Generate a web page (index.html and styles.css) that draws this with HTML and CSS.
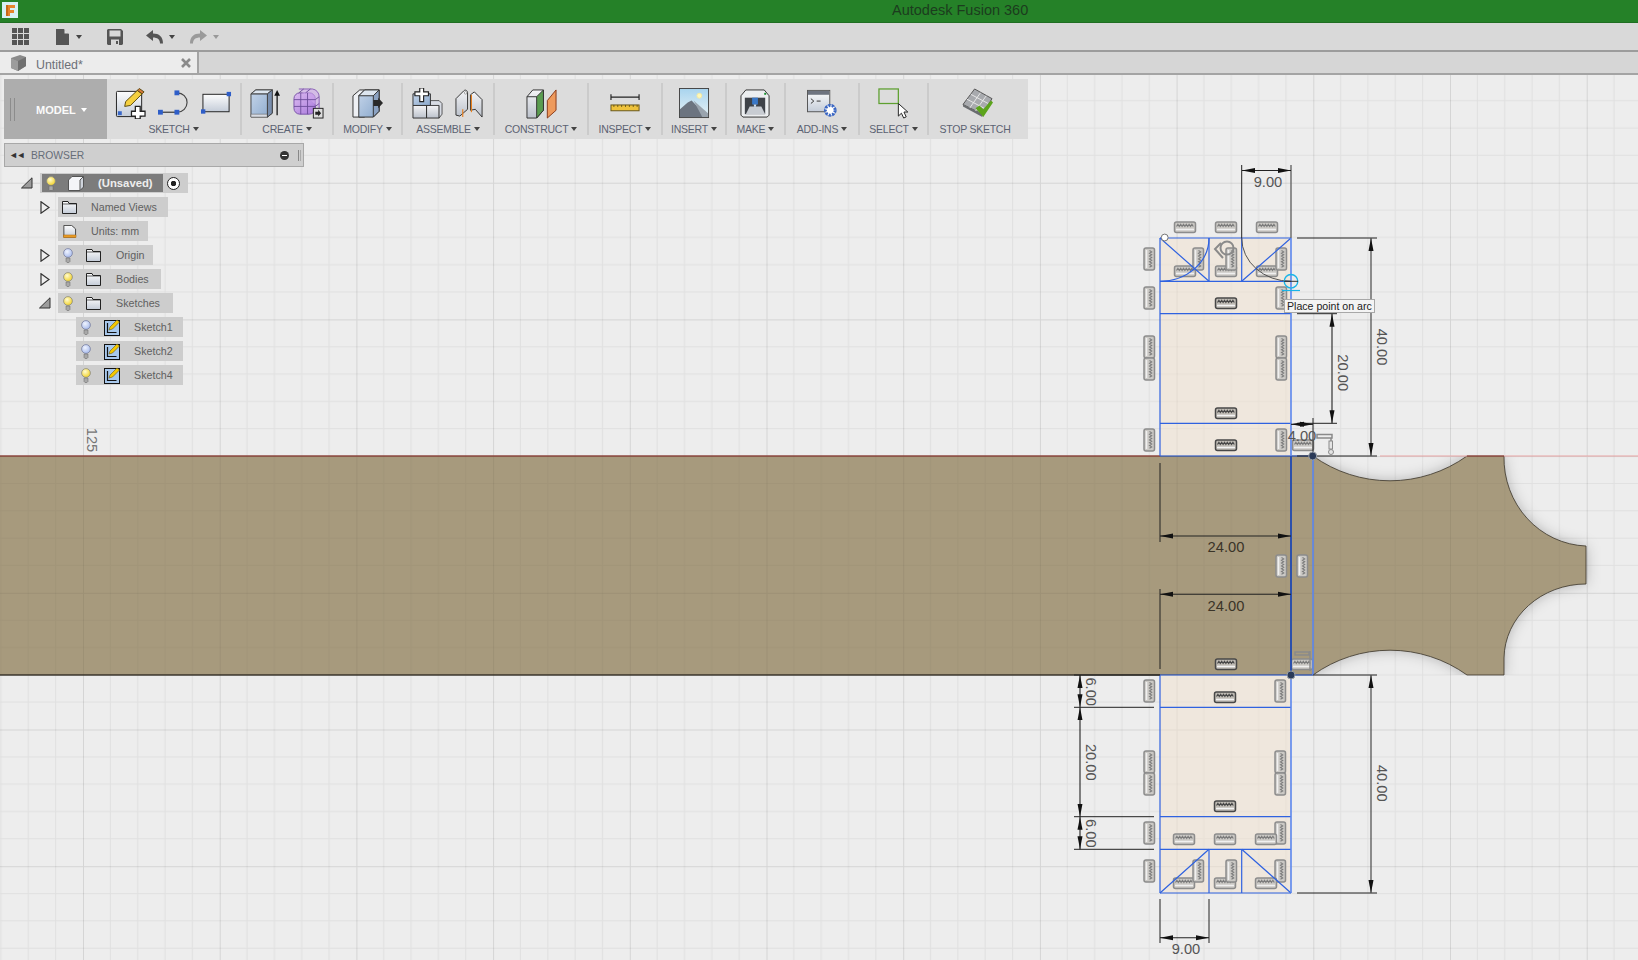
FILE: index.html
```html
<!DOCTYPE html>
<html lang="en">
<head>
    <meta charset="UTF-8">
    <title>Autodesk Fusion 360</title>
    <link rel="stylesheet" href="styles.css">
</head>
<body>

    <!-- shared gradients and icons -->
    <svg class="defs" aria-hidden="true">
        <defs>
            <linearGradient id="gPaper" x1="0" y1="0" x2="0" y2="1"><stop offset="0" stop-color="#fdfdfd"/><stop offset="1" stop-color="#c4ccd8"/></linearGradient>
            <linearGradient id="gBlue" x1="0" y1="0" x2="1" y2="1"><stop offset="0" stop-color="#c6d6ea"/><stop offset="1" stop-color="#8aa8cc"/></linearGradient>
            <linearGradient id="gGrey" x1="0" y1="0" x2="0" y2="1"><stop offset="0" stop-color="#f4f4f6"/><stop offset="1" stop-color="#bcc2cc"/></linearGradient>
            <linearGradient id="gSky" x1="0" y1="0" x2="0" y2="1"><stop offset="0" stop-color="#a8d4ee"/><stop offset="1" stop-color="#e8f2f6"/></linearGradient>
            <linearGradient id="gPurple" x1="0" y1="0" x2="1" y2="1"><stop offset="0" stop-color="#dcbcf0"/><stop offset="1" stop-color="#a878dc"/></linearGradient>
            <radialGradient id="gBulbY" cx=".4" cy=".35" r=".7"><stop offset="0" stop-color="#fffbd0"/><stop offset="1" stop-color="#f2d020"/></radialGradient>
            <radialGradient id="gBulbB" cx=".4" cy=".35" r=".7"><stop offset="0" stop-color="#f0f4ff"/><stop offset="1" stop-color="#a4b8ec"/></radialGradient>
        </defs>
        <symbol id="bulb-y" viewBox="0 0 10 15">
            <circle cx="5" cy="5" r="4.400" fill="url(#gBulbY)" stroke="#8a8a80" stroke-width=".8"/>
            <path d="M3 10h4v3.500l-1 1h-2l-1-1z" fill="#a8a8a8" stroke="#666" stroke-width=".5"/>
        </symbol>
        <symbol id="bulb-b" viewBox="0 0 10 15">
            <circle cx="5" cy="5" r="4.400" fill="url(#gBulbB)" stroke="#7a80a0" stroke-width=".8"/>
            <path d="M3 10h4v3.500l-1 1h-2l-1-1z" fill="#a8a8a8" stroke="#666" stroke-width=".5"/>
        </symbol>
        <symbol id="folder" viewBox="0 0 15 13">
            <path d="M.5 12.500v-12h5.500l1 2h7.500v10z" fill="url(#gPaper)" stroke="#222"/>
            <path d="M.5 3h14" stroke="#222" stroke-width=".7"/>
        </symbol>
        <symbol id="tree-sketch" viewBox="0 0 16 17">
            <rect x=".5" y="1.500" width="15" height="15" fill="#a8c8ec" stroke="#111"/>
            <path d="M3.500 4v9.500h9" fill="none" stroke="#111" stroke-width="1.200"/>
            <path d="M5 11l1-3 7-7 2.500 2-7 7z" fill="#f5c800" stroke="#6a5a10" stroke-width=".6"/>
        </symbol>
        <symbol id="twist-open" viewBox="0 0 12 12">
            <path d="M.5 11L11 .8V11z" fill="#9c9c9c" stroke="#333"/>
        </symbol>
        <symbol id="twist-closed" viewBox="0 0 10 13">
            <path d="M1 .8L9 6.500 1 12.200z" fill="#efefef" stroke="#333" stroke-width="1.200"/>
        </symbol>
    </svg>

    <!-- title bar -->
    <header class="titlebar">
        <svg class="app-icon" viewBox="0 0 16 16">
            <rect width="16" height="16" fill="#d8f0f4"/>
            <path d="M4 3h9v3H8v2h4v3H8v3H4z" fill="#e8842c"/>
            <path d="M4 3h2v11H4z" fill="#c86818"/>
        </svg>
        <span class="app-title">Autodesk Fusion 360</span>
    </header>

    <!-- quick access bar -->
    <div class="quickbar">
        <svg class="qa-grid" viewBox="0 0 17 17">
            <path fill="#555" d="M0 0h5v5H0zM6 0h5v5H6zM12 0h5v5h-5zM0 6h5v5H0zM6 6h5v5H6zM12 6h5v5h-5zM0 12h5v5H0zM6 12h5v5H6zM12 12h5v5h-5z"/>
        </svg>
        <svg class="qa-file" viewBox="0 0 14 16"><path fill="#555" d="M0 0h8l5 5v11H0z"/><path fill="#ddd" d="M8.500 0v4.500H13z"/></svg>
        <i class="caret dark"></i>
        <svg class="qa-save" viewBox="0 0 16 16">
            <path fill="#555" d="M1 0h13l2 2v13l-1 1H1l-1-1V1z"/>
            <path fill="#d8d8d8" d="M2.500 1.500h11v6h-11z"/>
            <path fill="#d8d8d8" d="M4 10.500h8V16H4z"/>
            <path fill="#555" d="M9 12h2v3H9z"/>
        </svg>
        <svg class="qa-undo" viewBox="0 0 17 14"><path fill="#555" d="M0 5.500L7 0v3.500c6 0 10 3 10 10h-3c0-4-2.500-6-7-6V11z"/></svg>
        <i class="caret dark"></i>
        <svg class="qa-redo" viewBox="0 0 17 14"><path fill="#9a9a9a" d="M17 5.500L10 0v3.500c-6 0-10 3-10 10h3c0-4 2.500-6 7-6V11z"/></svg>
        <i class="caret faint"></i>
    </div>

    <!-- document tabs -->
    <div class="tabbar">
        <div class="tab">
            <svg class="tab-cube" viewBox="0 0 16 16">
                <path d="M1 3l9-3 6 2v9l-8 5-7-3z" fill="#8a8a8a"/>
                <path d="M1 3l7 3 8-4v9l-8 5z" fill="#707070"/>
                <path d="M1 3l7 3v10l-7-3z" fill="#9c9c9c"/>
            </svg>
            <span class="tab-name">Untitled*</span>
            <svg class="tab-close" viewBox="0 0 10 10"><path d="M1 1l8 8M9 1l-8 8" stroke="#8a8a8a" stroke-width="2.600"/></svg>
        </div>
    </div>

    <main class="canvas">
        <!-- sketch on the drawing plane, viewBox follows window coordinates -->
        <svg class="scene" viewBox="0 75 1638 885">
            <defs>
                <pattern id="grid" patternUnits="userSpaceOnUse" x="83" y="46" width="136.7" height="136.7">
                    <path d="M27.340 0V136.700M54.680 0V136.700M82.020 0V136.700M109.360 0V136.700M0 27.340H136.700M0 54.680H136.700M0 82.020H136.700M0 109.360H136.700" stroke="#000" stroke-opacity=".055"/>
                    <path d="M.5 0V136.700M0 .5H136.700" stroke="#000" stroke-opacity=".1"/>
                </pattern>
                <marker id="tip" markerUnits="userSpaceOnUse" markerWidth="14" markerHeight="8" refX="13" refY="4" orient="auto-start-reverse">
                    <path d="M0 1.500L13 4 0 6.500z" fill="#111"/>
                </marker>
                <filter id="soft" x="-10%" y="-20%" width="120%" height="140%"><feGaussianBlur stdDeviation="7"/></filter>
                <clipPath id="band"><rect x="0" y="456" width="1638" height="219"/></clipPath>
                <path id="bodyShape" d="M-5 456H1313A132 132 0 0 0 1467 456H1504A85 88 0 0 0 1586 546V584A82 75 0 0 0 1504 658V675H1467A132 132 0 0 0 1313 675H-5Z"/>
                <clipPath id="bodyClip"><use href="#bodyShape"/></clipPath>
                <g id="ch">
                    <rect x="-10.500" y="-5" width="21" height="10.500" rx="2" fill="#cbc9c5" stroke="#8c8c8c" stroke-width="1.500"/>
                    <path d="M-8.500 -.5l1.400-2.200 1.400 2.200 1.400-2.200 1.400 2.200 1.400-2.200 1.400 2.200 1.400-2.200 1.400 2.200 1.400-2.200 1.400 2.200 1.400-2.200 1.400 2.200" fill="none" stroke="#7c7c7c" stroke-width="1.100"/>
                    <path d="M-9 2.500H9" stroke="#f0f0f0" stroke-width="1.500"/>
                </g>
                <g id="chd">
                    <rect x="-10.500" y="-5" width="21" height="10.500" rx="2" fill="#c0bcb5" stroke="#484848" stroke-width="1.500"/>
                    <path d="M-8.500 -.5l1.400-2.200 1.400 2.200 1.400-2.200 1.400 2.200 1.400-2.200 1.400 2.200 1.400-2.200 1.400 2.200 1.400-2.200 1.400 2.200 1.400-2.200 1.400 2.200" fill="none" stroke="#484848" stroke-width="1.100"/>
                    <path d="M-9 2.500H9" stroke="#f4f4f4" stroke-width="1.500"/>
                </g>
                <g id="cv">
                    <rect x="-5" y="-11" width="10.500" height="22" rx="2" fill="#cbc9c5" stroke="#8c8c8c" stroke-width="1.500"/>
                    <path d="M.5 -8.500l2.200 1.400-2.200 1.400 2.200 1.400-2.200 1.400 2.200 1.400-2.200 1.400 2.200 1.400-2.200 1.400 2.200 1.400-2.200 1.400 2.200 1.400-2.200 1.400" fill="none" stroke="#7c7c7c" stroke-width="1.100"/>
                    <path d="M-2.500 -9V9" stroke="#f0f0f0" stroke-width="1.500"/>
                </g>
            </defs>

            <rect x="0" y="75" width="1638" height="885" fill="#ededed"/>
            <rect x="0" y="75" width="1638" height="885" fill="url(#grid)"/>

            <!-- body -->
            <g clip-path="url(#band)">
                <use href="#bodyShape" filter="url(#soft)" fill="#000" fill-opacity=".26"/>
            </g>
            <use href="#bodyShape" fill="#a79a7d" stroke="#3a3428" stroke-width=".8"/>
            <rect x="0" y="456" width="1638" height="219" fill="url(#grid)" clip-path="url(#bodyClip)" opacity=".6"/>

            <!-- axis -->
            <path d="M0 456H1160M1467 456H1504" stroke="#a5423a" stroke-width="1.100"/>
            <path d="M1380 456H1467M1504 456H1638" stroke="#e8a4a4" stroke-width="1.100"/>
            <path d="M0 675H1160" stroke="#2e2a22" stroke-width="1"/>

            <!-- sketch profile fill -->
            <path d="M1160 238H1291V456H1160ZM1160 675H1291V893H1160Z" fill="#f0e2d0" fill-opacity=".55"/>

            <!-- constraint glyphs, top -->
            <use href="#ch" x="1185" y="227"/><use href="#ch" x="1226" y="227"/><use href="#ch" x="1267" y="227"/>
            <use href="#ch" x="1185" y="271"/><use href="#ch" x="1226" y="271"/><use href="#ch" x="1267" y="271"/>
            <use href="#cv" x="1149" y="259"/><use href="#cv" x="1149" y="298"/><use href="#cv" x="1149" y="347"/><use href="#cv" x="1149" y="369"/><use href="#cv" x="1149" y="440"/>
            <use href="#cv" x="1281" y="259"/><use href="#cv" x="1281" y="298"/><use href="#cv" x="1281" y="347"/><use href="#cv" x="1281" y="369"/><use href="#cv" x="1281" y="440"/>
            <use href="#cv" x="1198" y="259"/><use href="#cv" x="1231" y="259"/>
            <use href="#chd" x="1226" y="303"/><use href="#chd" x="1226" y="413"/><use href="#chd" x="1226" y="445"/>
            <use href="#ch" x="1303" y="445"/>
            <!-- constraint glyphs, middle -->
            <use href="#cv" x="1281" y="566"/><use href="#cv" x="1302" y="566"/>
            <use href="#chd" x="1226" y="664"/><use href="#ch" x="1302" y="664"/>
            <!-- constraint glyphs, bottom -->
            <use href="#cv" x="1149" y="691"/><use href="#cv" x="1149" y="762"/><use href="#cv" x="1149" y="784"/><use href="#cv" x="1149" y="833"/><use href="#cv" x="1149" y="871"/>
            <use href="#cv" x="1280" y="691"/><use href="#cv" x="1280" y="762"/><use href="#cv" x="1280" y="784"/><use href="#cv" x="1280" y="833"/><use href="#cv" x="1280" y="871"/>
            <use href="#chd" x="1225" y="697"/><use href="#chd" x="1225" y="806"/>
            <use href="#ch" x="1184" y="839"/><use href="#ch" x="1225" y="839"/><use href="#ch" x="1266" y="839"/>
            <use href="#ch" x="1184" y="883"/><use href="#ch" x="1225" y="883"/><use href="#ch" x="1266" y="883"/>
            <use href="#cv" x="1198" y="871"/><use href="#cv" x="1231" y="871"/>
            <!-- concentric and fix marks -->
            <circle cx="1227" cy="248" r="6.500" fill="none" stroke="#8a8a8a" stroke-width="2"/>
            <path d="M1221 243l-6 6 8 9" fill="none" stroke="#8a8a8a" stroke-width="2"/>
            <path d="M1317 434.500h15v3.500h-15zM1331 438v9" fill="none" stroke="#8a8a8a" stroke-width="1.500"/>
            <rect x="1329" y="441" width="3.500" height="8" fill="#e4e4e4" stroke="#8a8a8a"/>
            <circle cx="1331" cy="452" r="2.500" fill="#e4e4e4" stroke="#8a8a8a"/>
            <path d="M1295 652h14v3h-14zM1310 651v20" fill="none" stroke="#8a8a8a" stroke-width="1.500"/>

            <!-- sketch lines -->
            <g class="sk-line">
                <path d="M1160 238H1291M1160 281.300H1291M1160 313.700H1291M1160 423.300H1291M1160 456H1313M1160 238V456M1209 238V281.300M1241.700 238V281.300"/>
                <path d="M1160 238L1209 281.300M1241.700 281.300L1291 238"/>
                <path d="M1209 238A49 43.300 0 0 1 1160 281.300"/>
                <path d="M1160 675H1313M1160 707.300H1291M1160 816.700H1291M1160 849.300H1291M1160 893H1291M1160 675V893M1209 849.300V893M1241.700 849.300V893"/>
                <path d="M1160 893L1209 849.300M1241.700 849.300L1291 893"/>
            </g>
            <path d="M1291 238V456M1291 675V893" class="sk-light"/>
            <path d="M1291 456V675" class="sk-deep"/>
            <path d="M1313 456V675" class="sk-light"/>
            <path d="M1241.700 238A49 43.300 0 0 0 1291 281.300" fill="none" stroke="#444" stroke-width=".9"/>

            <!-- dimensions -->
            <g class="dim">
                <path d="M1241.700 165V238" />
                <path d="M1291 165V238" class="dim-grey"/>
                <path d="M1297 238H1377M1297 456H1377M1297 313.700H1337M1297 423.300H1337"/>
                <path d="M1313 418V456"/>
                <path d="M1160 463V542M1160 589V669"/>
                <path d="M1313 675H1377M1297 893H1377"/>
                <path d="M1074 707.300H1154M1074 816.700H1154M1074 849.300H1154M1074 675H1160"/>
                <path d="M1160 899V943M1209 899V943"/>
            </g>
            <g class="dim-run">
                <path d="M1242 170.500H1291"/>
                <path d="M1371 238V456" class="dim-grey"/>
                <path d="M1332 313.700V423.300"/>
                <path d="M1291 424.300H1313"/>
                <path d="M1160 536H1291"/>
                <path d="M1160 594.300H1291"/>
                <path d="M1371 675V893" class="dim-grey"/>
                <path d="M1080 675V707.300"/>
                <path d="M1080 707.300V816.700"/>
                <path d="M1080 816.700V849.300"/>
                <path d="M1160 937.700H1209"/>
            </g>
            <text class="dim-text" x="1268" y="187">9.00</text>
            <text class="dim-text" x="1302" y="441">4.00</text>
            <text class="dim-text on-body" x="1226" y="552">24.00</text>
            <text class="dim-text on-body" x="1226" y="611">24.00</text>
            <text class="dim-text" x="1186" y="954">9.00</text>
            <text class="dim-text" transform="translate(1377 347) rotate(90)">40.00</text>
            <text class="dim-text" transform="translate(1337.500 372.700) rotate(90)">20.00</text>
            <text class="dim-text" transform="translate(1376.500 783.300) rotate(90)">40.00</text>
            <text class="dim-text" transform="translate(1085.500 691.700) rotate(90)">6.00</text>
            <text class="dim-text" transform="translate(1085.500 762.300) rotate(90)">20.00</text>
            <text class="dim-text" transform="translate(1085.500 833.300) rotate(90)">6.00</text>
            <text class="axis-num" transform="translate(87 440) rotate(90)">125</text>

            <!-- sketch points and cursor -->
            <circle cx="1164.700" cy="237.500" r="3.400" fill="#fff" stroke="#777"/>
            <circle cx="1312.700" cy="456" r="4" fill="#2a3a58" stroke="#9aa0a8" stroke-width="1"/>
            <circle cx="1291" cy="675" r="4" fill="#2a3a58" stroke="#9aa0a8" stroke-width="1"/>
            <circle cx="1291" cy="281.300" r="6.800" fill="none" stroke="#18b4e8" stroke-width="1.400"/>
            <path d="M1284 281.300H1298" stroke="#333" stroke-width="1"/>
            <path d="M1282 290.500H1300" fill="none" stroke="#18b4e8" stroke-width="1.200"/>
        </svg>

        <!-- ribbon -->
        <nav class="ribbon">
            <div class="workspace">
                <span class="grip"></span>
                <span class="workspace-name">MODEL</span>
                <i class="caret light"></i>
            </div>

            <div class="rb-group g-sketch">
                <div class="rb-icons">
                    <svg class="ic" viewBox="0 0 32 32">
                        <rect x="1.500" y="3.500" width="26" height="26" rx="1" fill="url(#gPaper)" stroke="#222"/>
                        <rect x="3" y="24" width="4" height="4" fill="#3a68c8"/>
                        <path d="M10 19l1-5L23 2.500l5 3.500L16 18z" fill="#f5d040" stroke="#5a4a10"/>
                        <path d="M23 2.500l2-2 5 3.500-2 2z" fill="#d87838" stroke="#5a4a10"/>
                        <path d="M21 19h5v5h5v5h-5v3h-5v-3h-4v-5h4z" fill="#fff" stroke="#222" stroke-width="1.300"/>
                    </svg>
                    <svg class="ic" viewBox="0 0 32 32">
                        <path d="M3 25H21" stroke="#333" stroke-width="1.200"/>
                        <path d="M20 5a10 10 0 0 1 0 20" fill="none" stroke="#444" stroke-width="1.200"/>
                        <rect x="0" y="22.500" width="5" height="5" fill="#2f5ec8"/>
                        <rect x="17" y="22.500" width="5" height="5" fill="#2f5ec8"/>
                        <rect x="17" y="2.500" width="5" height="5" fill="#2f5ec8"/>
                    </svg>
                    <svg class="ic" viewBox="0 0 32 32">
                        <rect x="2" y="6.500" width="27" height="18" fill="url(#gPaper)" stroke="#222"/>
                        <rect x="26.500" y="4" width="4.500" height="4.500" fill="#2f5ec8"/>
                        <rect x="0" y="22" width="4.500" height="4.500" fill="#2f5ec8"/>
                    </svg>
                </div>
                <span class="rb-label">SKETCH<i class="caret dark"></i></span>
            </div>
            <span class="rb-sep"></span>

            <div class="rb-group g-create">
                <div class="rb-icons">
                    <svg class="ic" viewBox="0 0 32 32">
                        <path d="M1 6l5-4h17v24l-5 4H1z" fill="url(#gBlue)" stroke="#444"/>
                        <path d="M1 6h17v24M18 6l5-4" fill="none" stroke="#444"/>
                        <path d="M1 27h17v3H1z" fill="#d8dce4" stroke="#666" stroke-width=".6"/>
                        <path d="M1 6l5-4h17l-5 4z" fill="#dde6f0" stroke="#444"/>
                        <path d="M18 6l5-4v24l-5 4z" fill="#7a8fae" stroke="#444"/>
                        <path d="M28 28V6" stroke="#111" stroke-width="1.300"/><path d="M25 8l3-6 3 6z" fill="#111"/>
                    </svg>
                    <svg class="ic" viewBox="0 0 32 32">
                        <rect x="1" y="5" width="22" height="22" rx="6" fill="url(#gPurple)" stroke="#7a55a8"/>
                        <path d="M6 1h14a8 8 0 0 1 7 8v12" fill="#cfa8ec" fill-opacity=".6" stroke="#8a60b8"/>
                        <path d="M1 12H23M1 19H23M8 5V27M15 5V27M6 5l5-4M13 5l5-4M23 12l4-3M23 19l4-3" fill="none" stroke="#6a4a98" stroke-width=".9"/>
                        <rect x="21" y="21" width="10" height="10" fill="#ddd" stroke="#222"/>
                        <path d="M23 24.500h3v-2l3 3.500-3 3.500v-2h-3z" fill="#222"/>
                    </svg>
                </div>
                <span class="rb-label">CREATE<i class="caret dark"></i></span>
            </div>
            <span class="rb-sep"></span>

            <div class="rb-group g-modify">
                <div class="rb-icons">
                    <svg class="ic" viewBox="0 0 32 32">
                        <path d="M1 30V8l7-6h5v28z" fill="#eef0f4" stroke="#333"/>
                        <path d="M7 30V8l6-6h15v22l-6 6z" fill="url(#gBlue)" stroke="#333"/>
                        <path d="M7 8l6-6h15l-6 6z" fill="#dde6f0" stroke="#333"/>
                        <path d="M22 8l6-6v22l-6 6z" fill="#8ba2c2" stroke="#333"/>
                        <path d="M22 12.500h5V10l5 5.500-5 5.500v-2.500h-5z" fill="#2a2a2a"/>
                    </svg>
                </div>
                <span class="rb-label">MODIFY<i class="caret dark"></i></span>
            </div>
            <span class="rb-sep"></span>

            <div class="rb-group g-assemble">
                <div class="rb-icons">
                    <svg class="ic" viewBox="0 0 32 32">
                        <path d="M1 18h14v13H1zM15 18h13v13H15z" fill="url(#gGrey)" stroke="#333"/>
                        <path d="M15 18l4-5h9l3 3v11l-3 4V18z" fill="#d8dce4" stroke="#333" stroke-width=".8"/>
                        <path d="M1 6h14l4 0v12H1z" fill="url(#gBlue)" stroke="#333"/>
                        <path d="M4 4h4V0h4v4h5v4h-5v6H8V8H3V4z" fill="#fff" stroke="#222" stroke-width="1.200"/>
                    </svg>
                    <svg class="ic ic-narrow" viewBox="0 0 30 32">
                        <path d="M1 28V11l8-8c2-2 4 0 4 2v17l-8 7z" fill="url(#gGrey)" stroke="#333"/>
                        <path d="M28 30V12l-8-8-4 3v16l5-1 7 8z" fill="url(#gGrey)" stroke="#333"/>
                        <path d="M17 7v18" stroke="#e88020" stroke-width="1.200"/>
                        <path d="M8 30V22" stroke="#e88020" stroke-width="1.200"/>
                        <circle cx="11" cy="5" r="1.300" fill="#fff" stroke="#555" stroke-width=".5"/>
                    </svg>
                </div>
                <span class="rb-label">ASSEMBLE<i class="caret dark"></i></span>
            </div>
            <span class="rb-sep"></span>

            <div class="rb-group g-construct">
                <div class="rb-icons">
                    <svg class="ic" viewBox="0 0 32 32">
                        <path d="M1 9l6-7h11v21l-7 8H1z" fill="url(#gGrey)" stroke="#333"/>
                        <path d="M11 9l7-7v21l-7 8z" fill="#5a9c50" stroke="#333"/>
                        <path d="M1 9h10" stroke="#333"/>
                        <path d="M22 13l9-11v21l-9 8z" fill="#ee9a5c" stroke="#8a3a18"/>
                    </svg>
                </div>
                <span class="rb-label">CONSTRUCT<i class="caret dark"></i></span>
            </div>
            <span class="rb-sep"></span>

            <div class="rb-group g-inspect">
                <div class="rb-icons">
                    <svg class="ic" viewBox="0 0 32 32">
                        <path d="M1 9.500H30M1 6.500v6M30 6.500v6" stroke="#222" stroke-width="1.200"/>
                        <rect x="1" y="17.500" width="29" height="6" fill="#eec23c" stroke="#66551a"/>
                        <path d="M4 17.500v2M8 17.500v2M12 17.500v2M16 17.500v2M20 17.500v2M24 17.500v2M28 17.500v2" stroke="#66551a"/>
                    </svg>
                </div>
                <span class="rb-label">INSPECT<i class="caret dark"></i></span>
            </div>
            <span class="rb-sep"></span>

            <div class="rb-group g-insert">
                <div class="rb-icons">
                    <svg class="ic" viewBox="0 0 32 32">
                        <rect x=".5" y=".5" width="30" height="30" fill="url(#gSky)" stroke="#444"/>
                        <circle cx="21" cy="8" r="2.500" fill="#fff8b8" stroke="#f4e8a0"/>
                        <path d="M1 30V22l8-7 4-2 6 6 11 10v1z" fill="#6c7480"/>
                        <path d="M15 13l15 13v4h-6z" fill="#9aa4ae"/>
                    </svg>
                </div>
                <span class="rb-label">INSERT<i class="caret dark"></i></span>
            </div>
            <span class="rb-sep"></span>

            <div class="rb-group g-make">
                <div class="rb-icons">
                    <svg class="ic" viewBox="0 0 32 32">
                        <path d="M1 8l5-6h19l5 6v20l-2 2H3l-2-2z" fill="#eceef0" stroke="#333"/>
                        <rect x="5" y="10" width="21" height="17" fill="#3e4248"/>
                        <path d="M6 27l4-8h12l4 8z" fill="#c8ccd2"/>
                        <rect x="12.500" y="10" width="6" height="7" fill="#3a78c8"/>
                        <path d="M14 17h3l-1.500 4z" fill="#cfe0f4"/>
                        <rect x="25" y="5" width="2" height="2" fill="#189030"/>
                    </svg>
                </div>
                <span class="rb-label">MAKE<i class="caret dark"></i></span>
            </div>
            <span class="rb-sep"></span>

            <div class="rb-group g-addins">
                <div class="rb-icons">
                    <svg class="ic" viewBox="0 0 32 32">
                        <rect x=".5" y="2.500" width="23" height="22" fill="url(#gPaper)" stroke="#555"/>
                        <rect x="1" y="3" width="22" height="4" fill="#6e7480"/>
                        <path d="M4 11l3 2.500-3 2.500M10 13.500h4" fill="none" stroke="#333"/>
                        <circle cx="24" cy="23" r="5" fill="#fff" stroke="#3a66c4" stroke-width="3" stroke-dasharray="2.200 1.300"/>
                        <circle cx="24" cy="23" r="6" fill="none" stroke="#3a66c4" stroke-width=".6"/>
                    </svg>
                </div>
                <span class="rb-label">ADD-INS<i class="caret dark"></i></span>
            </div>
            <span class="rb-sep"></span>

            <div class="rb-group g-select">
                <div class="rb-icons">
                    <svg class="ic" viewBox="0 0 32 32">
                        <rect x="1" y="1" width="20" height="15" fill="none" stroke="#5ea030" stroke-width="1.300"/>
                        <path d="M21 16v13l3.200-3 2.300 5 2.600-1.200-2.300-5h4z" fill="#fff" stroke="#222"/>
                    </svg>
                </div>
                <span class="rb-label">SELECT<i class="caret dark"></i></span>
            </div>
            <span class="rb-sep"></span>

            <div class="rb-group g-stop">
                <div class="rb-icons">
                    <svg class="ic" viewBox="0 0 32 32">
                        <path d="M1 17L13 1l18 10-10 16z" fill="#a8aaae" stroke="#555"/>
                        <path d="M5 11.500l18 9.500M9 6.500l18 9.500M7 22L19 5M13 25L25 8" stroke="#e8e8e8"/>
                        <path d="M1 17l20 10v3L1 19z" fill="#6a6c70"/>
                        <path d="M14 21l4-3 4 4 8-9 2 2-10 15z" fill="#5ca41c"/>
                    </svg>
                </div>
                <span class="rb-label">STOP SKETCH</span>
            </div>
        </nav>

        <!-- browser panel -->
        <section class="browser">
            <div class="browser-head">
                <span class="head-arrows">◄◄</span>
                <span class="head-title">BROWSER</span>
                <span class="head-min"></span>
                <span class="head-grip"></span>
            </div>
            <ul class="tree">
                <li class="row lvl0">
                    <svg class="twist twist-o"><use href="#twist-open"/></svg>
                    <div class="pill pill-root">
                        <div class="root-dark">
                            <svg class="bulb"><use href="#bulb-y"/></svg>
                            <svg class="root-cube" viewBox="0 0 16 15">
                                <path d="M.5 4L4 .5h11.500V11L12 14.500H.5z" fill="#f4f5f8" stroke="#555"/>
                                <path d="M12 4v10.500L15.500 11V.5z" fill="#cfd4dc" stroke="#555"/>
                            </svg>
                            <span class="root-name">(Unsaved)</span>
                        </div>
                        <span class="radio"></span>
                    </div>
                </li>
                <li class="row lvl1">
                    <svg class="twist twist-c"><use href="#twist-closed"/></svg>
                    <div class="pill w-named">
                        <svg class="folder first"><use href="#folder"/></svg>
                        <span class="node-name">Named Views</span>
                    </div>
                </li>
                <li class="row lvl1">
                    <span class="twist twist-blank"></span>
                    <div class="pill w-units">
                        <svg class="folder first" viewBox="0 0 15 15">
                            <path d="M1 .5h9l4.500 4V14H1z" fill="url(#gPaper)" stroke="#333"/>
                            <rect x=".5" y="11.500" width="14.500" height="3" fill="#e89a24" stroke="#a8660c" stroke-width=".5"/>
                        </svg>
                        <span class="node-name">Units: mm</span>
                    </div>
                </li>
                <li class="row lvl1">
                    <svg class="twist twist-c"><use href="#twist-closed"/></svg>
                    <div class="pill w-origin">
                        <svg class="bulb"><use href="#bulb-b"/></svg>
                        <svg class="folder"><use href="#folder"/></svg>
                        <span class="node-name">Origin</span>
                    </div>
                </li>
                <li class="row lvl1">
                    <svg class="twist twist-c"><use href="#twist-closed"/></svg>
                    <div class="pill w-bodies">
                        <svg class="bulb"><use href="#bulb-y"/></svg>
                        <svg class="folder"><use href="#folder"/></svg>
                        <span class="node-name">Bodies</span>
                    </div>
                </li>
                <li class="row lvl1">
                    <svg class="twist twist-o2"><use href="#twist-open"/></svg>
                    <div class="pill w-sketches">
                        <svg class="bulb"><use href="#bulb-y"/></svg>
                        <svg class="folder"><use href="#folder"/></svg>
                        <span class="node-name">Sketches</span>
                    </div>
                </li>
                <li class="row lvl2">
                    <div class="pill">
                        <svg class="bulb"><use href="#bulb-b"/></svg>
                        <svg class="sk-ic"><use href="#tree-sketch"/></svg>
                        <span class="node-name">Sketch1</span>
                    </div>
                </li>
                <li class="row lvl2">
                    <div class="pill">
                        <svg class="bulb"><use href="#bulb-b"/></svg>
                        <svg class="sk-ic"><use href="#tree-sketch"/></svg>
                        <span class="node-name">Sketch2</span>
                    </div>
                </li>
                <li class="row lvl2">
                    <div class="pill">
                        <svg class="bulb"><use href="#bulb-y"/></svg>
                        <svg class="sk-ic"><use href="#tree-sketch"/></svg>
                        <span class="node-name">Sketch4</span>
                    </div>
                </li>
            </ul>
        </section>

        <div class="tip">Place point on arc</div>
    </main>

</body>
</html>
```

FILE: styles.css
```css
* { box-sizing: border-box; }
html, body { margin: 0; height: 100%; overflow: hidden; }
body { display: flex; flex-direction: column; font-family: "Liberation Sans", Arial, sans-serif; background: #ededed; color: #555; }
.defs { position: absolute; width: 0; height: 0; }

/* title bar */
.titlebar { display: flex; align-items: center; height: 23px; padding: 0 0 1px 2px; background: #258128; border-bottom: 1px solid #1f6e22; }
.app-icon { width: 16px; height: 16px; }
.app-title { margin-left: 874px; font-size: 14.5px; color: #1c3c1e; }

/* quick access */
.quickbar { display: flex; align-items: center; height: 30px; border-bottom: 2px solid #9c9c9c; background: #d9d9d9; }
.qa-grid { width: 17px; height: 17px; margin-left: 12px; }
.qa-file { width: 14px; height: 16px; margin-left: 27px; }
.qa-save { width: 16px; height: 16px; margin-left: 25px; }
.qa-undo { width: 17px; height: 14px; margin-left: 23px; }
.qa-redo { width: 17px; height: 14px; margin-left: 15px; }
.caret { display: inline-block; width: 0; height: 0; margin-left: 6px; border-left: 3px solid transparent; border-right: 3px solid transparent; border-top: 4px solid #444; }
.caret.faint { border-top-color: #999; }
.caret.light { border-top-color: #fff; margin-left: 5px; }

/* tabs */
.tabbar { display: flex; height: 23px; background: #d6d6d6; border-bottom: 2px solid #a4a4a4; }
.tab { display: flex; align-items: center; width: 199px; padding-left: 10px; background: #ececec; border-right: 2px solid #a4a4a4; }
.tab-cube { width: 16px; height: 16px; }
.tab-name { margin: 5px 0 0 10px; font-size: 12.4px; color: #6c7078; }
.tab-close { width: 10px; height: 10px; margin-left: 98px; }

/* drawing area */
.canvas { position: relative; flex: 1; }
.scene { display: block; width: 1638px; height: 885px; }
.sk-line path { fill: none; stroke: #2f62e0; stroke-width: 1.2; }
.sk-light { fill: none; stroke: #5a86ee; stroke-width: 1.6; }
.sk-deep { fill: none; stroke: #2c50ac; stroke-width: 2; }
.dim path { fill: none; stroke: #222; stroke-width: 1; }
.dim .dim-grey { stroke: #666; stroke-width: 1.4; }
.dim-run path { fill: none; stroke: #222; stroke-width: 1.1; marker-start: url(#tip); marker-end: url(#tip); }
.dim-run .dim-grey { stroke: #555; stroke-width: 1.3; }
.dim-text { font-size: 14.7px; fill: #555; text-anchor: middle; }
.dim-text.on-body { fill: #3a3428; }
.axis-num { font-size: 14.7px; fill: #747474; text-anchor: middle; }

/* ribbon */
.ribbon { position: absolute; left: 4px; top: 4px; display: flex; align-items: center; height: 60px; background: #dcdcdc; }
.workspace { display: flex; align-items: center; width: 103px; height: 60px; padding: 1px 0 0 6px; background: #adadad; }
.grip { width: 5px; height: 23px; border-left: 1px solid #8c8c8c; border-right: 1px solid #8c8c8c; }
.workspace-name { margin-left: 21px; font-size: 11px; font-weight: bold; color: #fbfbfb; }
.rb-group { display: flex; flex-direction: column; align-items: center; height: 60px; padding-top: 8px; }
.rb-icons { display: flex; align-items: center; gap: 12px; height: 33px; }
.ic { width: 31px; height: 31px; }
.ic-narrow { width: 29px; }
.rb-label { display: flex; align-items: center; margin-top: 2px; height: 14px; font-size: 10.5px; letter-spacing: -.25px; color: #5b6272; white-space: nowrap; }
.rb-label .caret { margin-left: 3px; }
.rb-sep { width: 2px; height: 52px; background: #cbcbcb; }
.g-sketch { width: 133px; }
.g-create { width: 90px; }
.g-modify { width: 67px; }
.g-assemble { width: 90px; }
.g-construct { width: 92px; }
.g-inspect { width: 72px; }
.g-insert { width: 62px; }
.g-make { width: 57px; }
.g-addins { width: 72px; }
.g-select { width: 67px; }
.g-stop { width: 99px; }
.g-stop .rb-label { margin-right: 7px; }
.g-stop .rb-icons { margin-right: 2px; }

/* browser */
.browser { position: absolute; left: 4px; top: 68px; width: 300px; }
.browser-head { display: flex; align-items: center; height: 24px; background: #cfcfcf; border: 1px solid #a8a8a8; }
.head-arrows { width: 26px; padding-left: 4px; font-size: 9px; letter-spacing: -1.5px; color: #333; }
.head-title { flex: 1; font-size: 10.3px; color: #666d78; }
.head-min { position: relative; width: 9px; height: 9px; border-radius: 50%; background: #333; }
.head-min::after { content: ""; position: absolute; left: 2px; top: 4px; width: 5px; height: 1px; background: #fff; }
.head-grip { width: 3px; height: 11px; margin: 0 2px 0 9px; border-left: 1px solid #888; border-right: 1px solid #aaa; }
.tree { margin: 6px 0 0; padding: 0; list-style: none; }
.row { display: flex; align-items: center; height: 20px; margin-bottom: 4px; }
.lvl0 { margin-left: 36px; }
.lvl1 { margin-left: 54px; }
.lvl2 { margin-left: 72px; }
.twist { flex: none; }
.twist-o { width: 12px; height: 12px; margin: 0 0 0 -19px; }
.twist-o2 { width: 12px; height: 12px; margin-left: -19px; }
.twist-c { width: 10px; height: 13px; margin-left: -18px; }
.twist-blank { width: 10px; margin-left: -18px; }
.lvl0 .pill { margin-left: 7px; }
.lvl1 .pill { margin-left: 8px; }
.lvl1 .twist-o2 + .pill { margin-left: 7px; }
.pill { display: flex; align-items: center; height: 20px; padding-right: 10px; background: #cdcdcd; }
.w-named { width: 110px; padding: 0; }
.w-units { width: 90px; padding: 0; }
.w-origin { width: 95px; padding: 0; }
.w-bodies { width: 103px; padding: 0; }
.w-sketches { width: 115px; padding: 0; }
.pill-root { padding: 0; width: 148px; }
.root-dark { display: flex; align-items: center; width: 121px; height: 18px; margin-left: 2px; background: #7c7c7c; }
.root-dark .bulb { margin-left: 4px; }
.root-cube { width: 16px; height: 15px; margin-left: 12px; }
.root-name { margin-left: 14px; font-size: 11.3px; font-weight: bold; color: #eeeeee; }
.radio { width: 13px; height: 13px; margin-left: 4px; border: 1px solid #222; border-radius: 50%; background: radial-gradient(circle, #222 0 2.500px, #fff 3px); }
.bulb { width: 10px; height: 15px; margin-left: 5px; flex: none; }
.folder { width: 15px; height: 13px; margin-left: 13px; flex: none; }
.folder.first { margin-left: 4px; }
.sk-ic { width: 16px; height: 17px; margin-left: 13px; flex: none; }
.node-name { margin-left: 15px; font-size: 10.7px; color: #606060; white-space: nowrap; }
.folder.first + .node-name { margin-left: 14px; }
.lvl2 .node-name { margin-left: 14px; }

/* tooltip */
.tip { position: absolute; left: 1284px; top: 224px; padding: 0 2px; height: 14px; line-height: 13px; background: #f4f4f4; border: 1px solid #a8a8a8; font-size: 10.6px; color: #222; white-space: nowrap; }
```
